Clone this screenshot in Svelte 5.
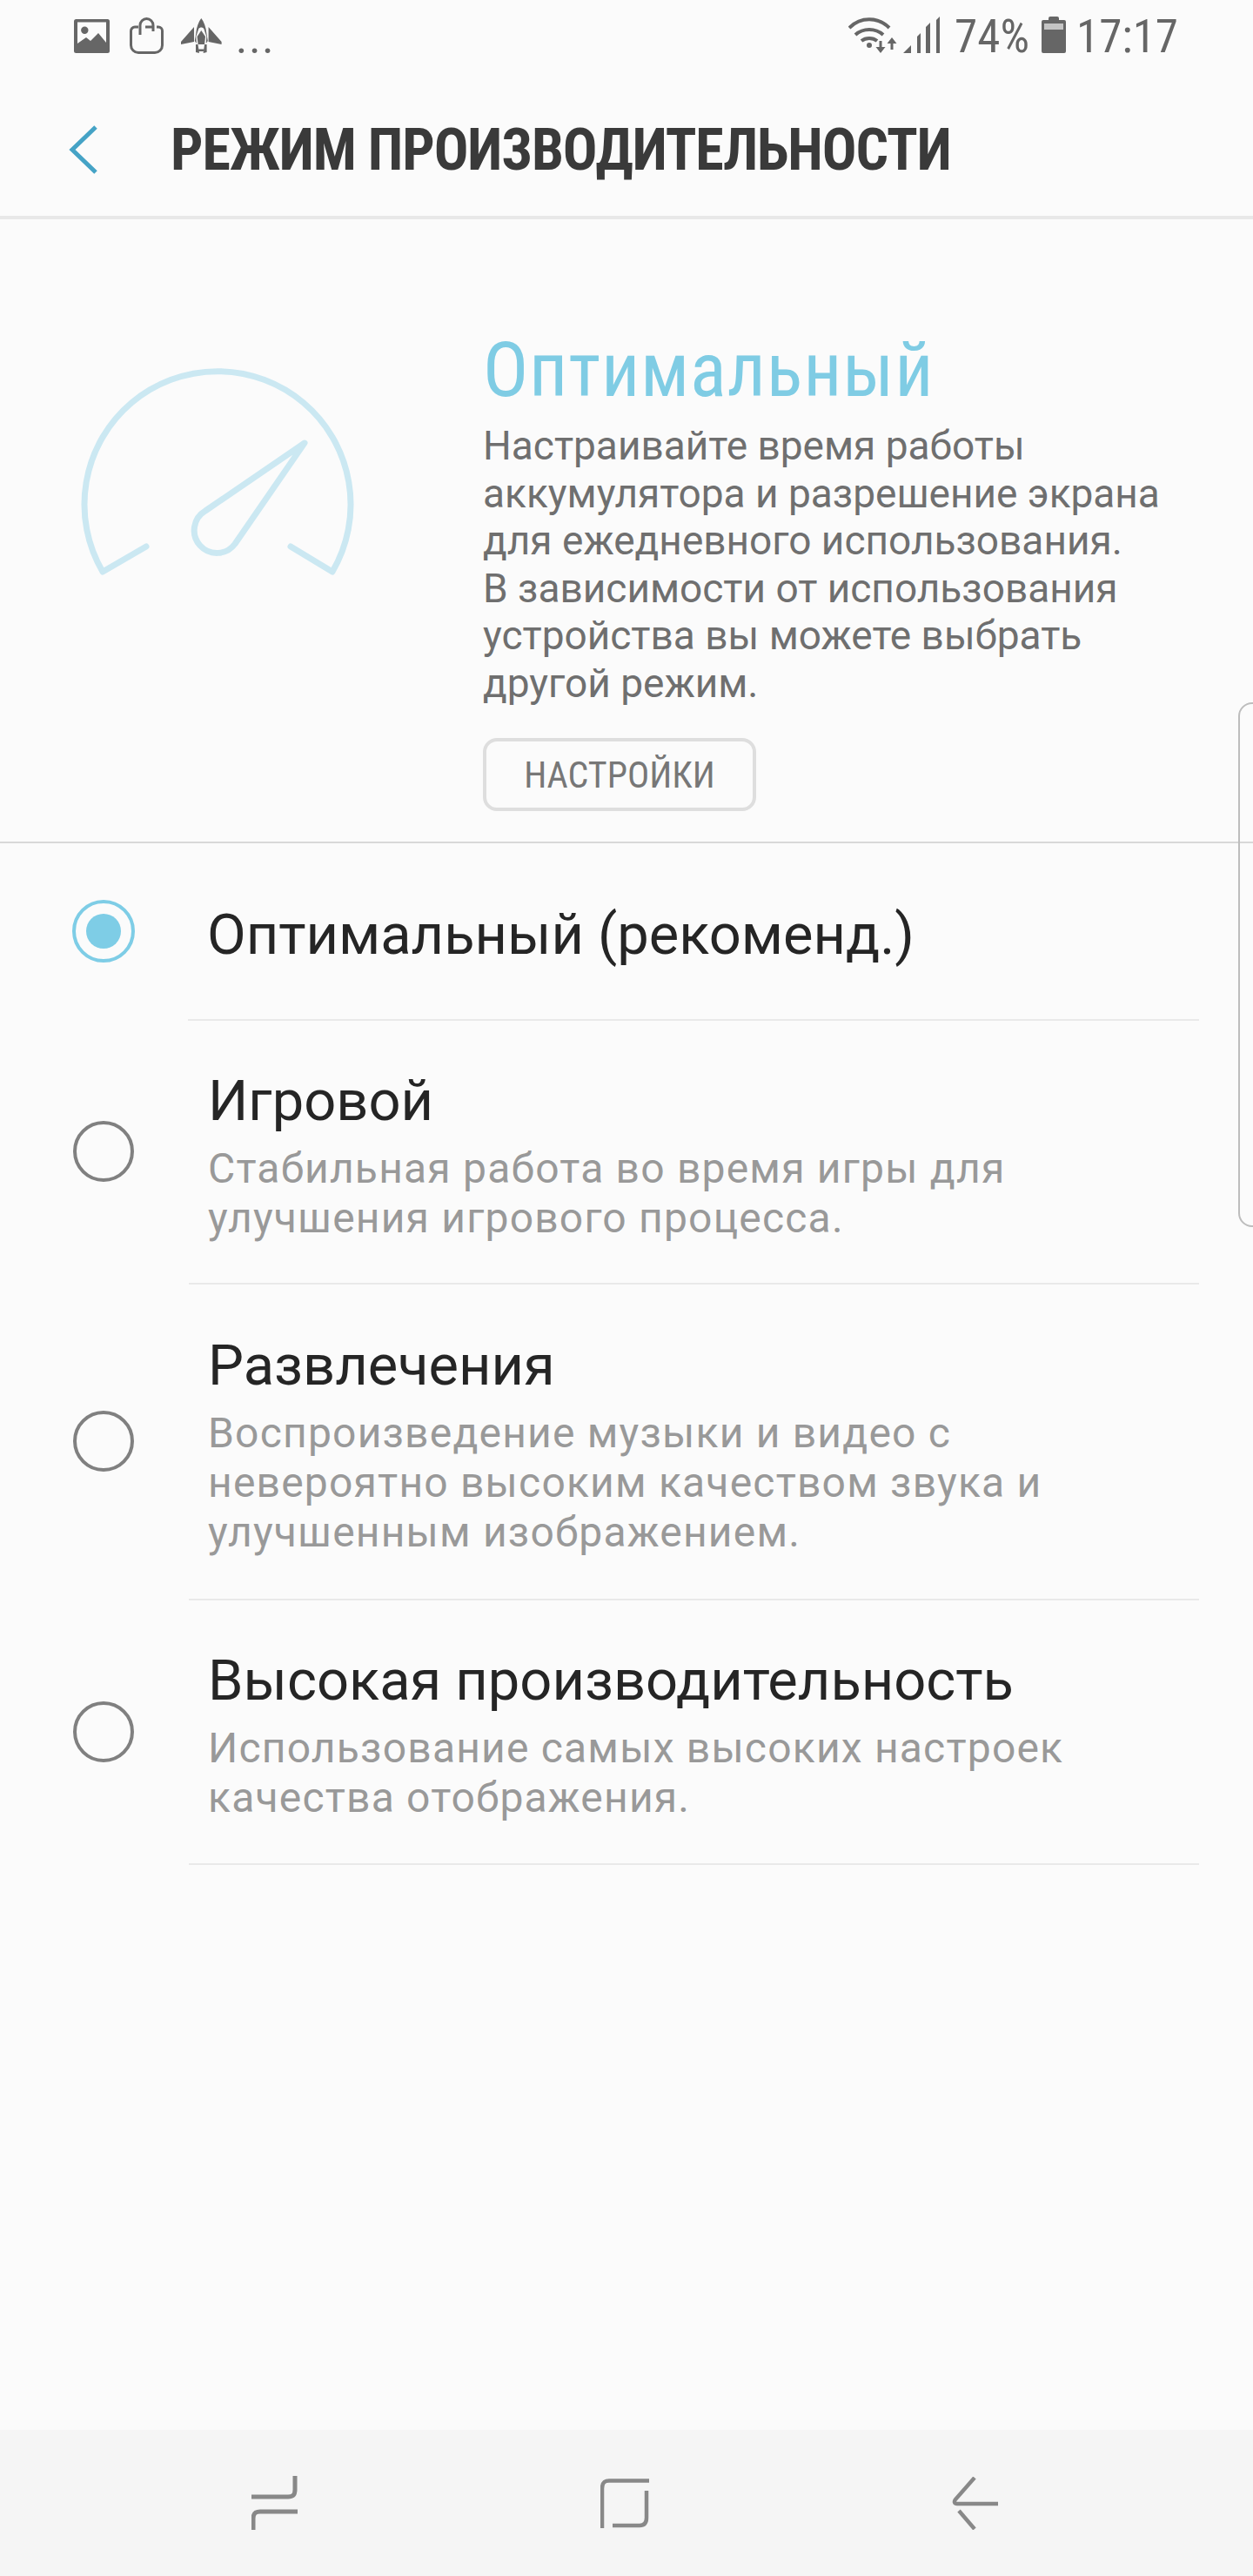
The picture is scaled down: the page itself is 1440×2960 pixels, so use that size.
<script>
  const options = [
    { title: 'Оптимальный (рекоменд.)', lines: [], selected: true, height: 204 },
    { title: 'Игровой', lines: ['Стабильная работа во время игры для', 'улучшения игрового процесса.'], height: 303 },
    { title: 'Развлечения', lines: ['Воспроизведение музыки и видео с', 'невероятно высоким качеством звука и', 'улучшенным изображением.'], height: 363 },
    { title: 'Высокая производительность', lines: ['Использование самых высоких настроек', 'качества отображения.'], height: 304 }
  ];

  const description = [
    'Настраивайте время работы',
    'аккумулятора и разрешение экрана',
    'для ежедневного использования.',
    'В зависимости от использования',
    'устройства вы можете выбрать',
    'другой режим.'
  ];
</script>

<div class="phone">
  <div class="status">
    <div class="status-left">
      <svg class="pic" width="41" height="39" viewBox="0 0 41 39">
        <rect width="41" height="39" rx="2.500" fill="#666" />
        <path d="M4 3.500h33v23.500L28 16l-9 9-5-4-10 7z" fill="#fbfbfb" />
        <circle cx="12.300" cy="12.700" r="4.200" fill="#666" />
      </svg>
      <svg class="bag" width="39" height="42" viewBox="0 0 39 42" fill="none" stroke="#666" stroke-width="3">
        <path d="M10 11H6a4.500 4.500 0 0 0-4.500 4.500V32a8.500 8.500 0 0 0 8.500 8.500h19a8.500 8.500 0 0 0 8.500-8.500V15.500a4.500 4.500 0 0 0-4.500-4.500h-2" />
        <path d="M12 20V9a7.500 7.500 0 0 1 15 0v7M18 11h9" />
      </svg>
      <svg class="jet" width="47" height="41" viewBox="0 0 47 41" fill="#666">
        <path d="M23.300 0c3 4 5.500 10 6 17l1.500 9-2 3 .5-8-3-9c-1.500-2-4.500-2-6 0l-3 9 .5 8-2-3 1.500-9c.5-7 3-13 6-17z" />
        <path d="M15 10L0 27v3l15-3zM31.600 10l15 17v3l-15-3z" />
        <path d="M23.300 14l4.700 7-1 9h-7.400l-1-9z" />
        <path d="M17 30h2.500l1.500 10-4-1zM29.600 30h-2.500l-1.500 10 4-1zM20.500 35.500h5.600v2.500h-5.600z" />
      </svg>
      <span class="dots">...</span>
    </div>
    <div class="status-right">
      <svg class="wifi" width="56" height="43" viewBox="0 0 56 43" fill="none" stroke="#666" stroke-width="4">
        <path d="M1 13c13-13 33-13 46 0M8 21c9-8 23-8 32 0M15 28c5-4 13-4 18 0" />
        <circle cx="24" cy="33" r="3" fill="#666" stroke="none" />
        <path d="M37 28v9M50 29v9" stroke-width="3" />
        <path d="M31.500 35h11l-5.500 7zM44.500 31h11l-5.500-7z" fill="#666" stroke="none" />
      </svg>
      <svg class="signal" width="43" height="42" viewBox="0 0 43 42" fill="#666">
        <path d="M0 42l9-9v9zM16 23l4-4v23h-4zM26 12l5-5v35h-5zM38 4l4-4v42h-4z" />
      </svg>
      <span class="pct">74%</span>
      <svg class="battery" width="28" height="42" viewBox="0 0 28 42" fill="#666">
        <path d="M8 2a2 2 0 0 1 2-2h8a2 2 0 0 1 2 2v2h6a2 2 0 0 1 2 2v34a2 2 0 0 1-2 2H2a2 2 0 0 1-2-2V6a2 2 0 0 1 2-2h6z" />
        <rect x="3" y="8" width="22" height="7" fill="#c4c4c4" />
      </svg>
      <span class="time">17:17</span>
    </div>
  </div>

  <header>
    <svg class="chevron" width="34" height="56" viewBox="0 0 34 56" fill="none" stroke="#45a3c6" stroke-width="5">
      <path d="M31 2L4 28l27 26" />
    </svg>
    <h1>РЕЖИМ ПРОИЗВОДИТЕЛЬНОСТИ</h1>
  </header>

  <section class="hero">
    <svg class="gauge" width="320" height="250" viewBox="90 420 320 250" fill="none" stroke="#cbe8f2" stroke-width="7" stroke-linecap="round" stroke-linejoin="round">
      <path d="M168 628L118 657A153 153 0 1 1 382 657L334 628" />
      <path d="M350 509L236 587A26 26 0 1 0 270 625Z" />
    </svg>
    <div class="hero-text">
      <h2>Оптимальный</h2>
      <p>
        {#each description as line}
          <span>{line}</span>
        {/each}
      </p>
      <button>НАСТРОЙКИ</button>
    </div>
  </section>

  <ul>
    {#each options as opt}
      <li style="height: {opt.height}px">
        <div class="radio" class:on={opt.selected}></div>
        <div class="row">
          <div class="row-title">{opt.title}</div>
          {#each opt.lines as line}
            <div class="row-sub">{line}</div>
          {/each}
        </div>
      </li>
    {/each}
  </ul>

  <div class="spacer"></div>

  <nav>
    <svg width="53" height="62" viewBox="0 0 53 62" fill="none" stroke="#888" stroke-width="5">
      <path d="M50 0v16c0 6-3 8-8 8H0" />
      <path d="M53 41H10c-5 0-8 2-8 8v13" />
    </svg>
    <svg width="56" height="57" viewBox="0 0 56 57" fill="none" stroke="#888" stroke-width="4.500">
      <path d="M56 2.500H10c-6 0-8 3-8 9V57" />
      <path d="M53 14v31c0 6-3 9-8 9H14" />
    </svg>
    <svg width="53" height="61" viewBox="0 0 53 61" fill="none" stroke="#888" stroke-width="4.500">
      <path d="M26 1L4 26c-2 3-1 5 2 5h47" />
      <path d="M8 39l18 21" />
    </svg>
  </nav>

  <div class="handle"></div>
</div>

<style>
  :global(body) {
    background: #fbfbfb;
  }

  .phone {
    position: relative;
    height: 2960px;
    display: flex;
    flex-direction: column;
    background: #fbfbfb;
    font-family: Roboto, "Noto Sans", sans-serif;
    overflow: hidden;
  }

  .status {
    height: 96px;
    display: flex;
    justify-content: space-between;
    padding: 19px 86px 0 85px;
    box-sizing: border-box;
    color: #666;
  }

  .status-left, .status-right {
    display: flex;
    align-items: flex-start;
  }

  .pic { margin-top: 3px; }
  .bag { margin: 1px 0 0 23px; }
  .jet { margin: 2px 0 0 20px; }

  .dots {
    margin-left: 16px;
    font-size: 50px;
    line-height: 50px;
    letter-spacing: 2px;
  }

  .pct, .time {
    font-size: 53px;
    line-height: 46px;
    font-stretch: 75%;
  }

  .signal { margin-left: 7px; }
  .pct { margin-left: 16px; }
  .battery { margin-left: 14px; }
  .time { margin-left: 12px; }

  header {
    height: 156px;
    flex: none;
    display: flex;
    align-items: center;
    padding-left: 79px;
    box-sizing: border-box;
    border-bottom: 4px solid #e8e8e8;
  }

  h1 {
    margin: 0 0 0 83px;
    font-size: 66px;
    font-weight: 700;
    font-stretch: 75%;
    letter-spacing: -1.100px;
    color: #3a3a3a;
    white-space: nowrap;
  }

  .hero {
    height: 717px;
    flex: none;
    display: flex;
    box-sizing: border-box;
    padding: 0 0 0 90px;
    border-bottom: 2px solid #d8d8d8;
  }

  .gauge { margin-top: 168px; margin-right: 145px; }

  .hero-text { padding-top: 128px; }

  h2 {
    margin: 0;
    font-size: 87px;
    line-height: 90px;
    font-weight: 400;
    font-stretch: 75%;
    letter-spacing: 0.800px;
    color: #7fcce4;
  }

  p {
    margin: 15px 0 0;
    font-size: 46px;
    line-height: 54.500px;
    color: #6f6f6f;
  }

  p span { display: block; }

  button {
    display: block;
    width: 314px;
    height: 84px;
    margin-top: 36px;
    padding: 0;
    background: none;
    border: 4px solid #dedede;
    border-radius: 16px;
    font: inherit;
    font-size: 42px;
    font-stretch: 75%;
    color: #777;
  }

  ul {
    list-style: none;
    margin: 0;
    padding: 0;
  }

  li {
    position: relative;
    display: flex;
    box-sizing: border-box;
  }

  .radio {
    flex: none;
    align-self: center;
    width: 70px;
    height: 70px;
    margin: 0 0 3px 84px;
    box-sizing: border-box;
    border: 4px solid #808080;
    border-radius: 50%;
  }

  .radio.on {
    width: 72px;
    height: 72px;
    margin-left: 83px;
    margin-right: -2px;
    border-color: #7ecde6;
    display: grid;
    place-items: center;
  }

  .radio.on::after {
    content: '';
    width: 40px;
    height: 40px;
    border-radius: 50%;
    background: #7ecde6;
  }

  .row {
    flex: 1;
    margin: 0 62px 0 63px;
    padding: 7px 0 0 22px;
    border-bottom: 2px solid #e9e9e9;
    display: flex;
    flex-direction: column;
    justify-content: center;
  }

  .row-title {
    font-size: 65px;
    line-height: 76px;
    color: #252525;
  }

  .row-title + .row-sub { margin-top: 11px; }

  .row-sub {
    font-size: 48px;
    line-height: 57px;
    letter-spacing: 1.200px;
    color: #999;
  }

  .spacer { flex: 1; }

  nav {
    height: 168px;
    flex: none;
    background: #f5f5f5;
    display: flex;
    align-items: center;
    justify-content: space-between;
    padding: 0 293px 0 289px;
    box-sizing: border-box;
  }

  .handle {
    position: absolute;
    top: 807px;
    left: 1423px;
    width: 40px;
    height: 603px;
    box-sizing: border-box;
    border: 2px solid #bdbdbd;
    border-radius: 16px;
  }
</style>
